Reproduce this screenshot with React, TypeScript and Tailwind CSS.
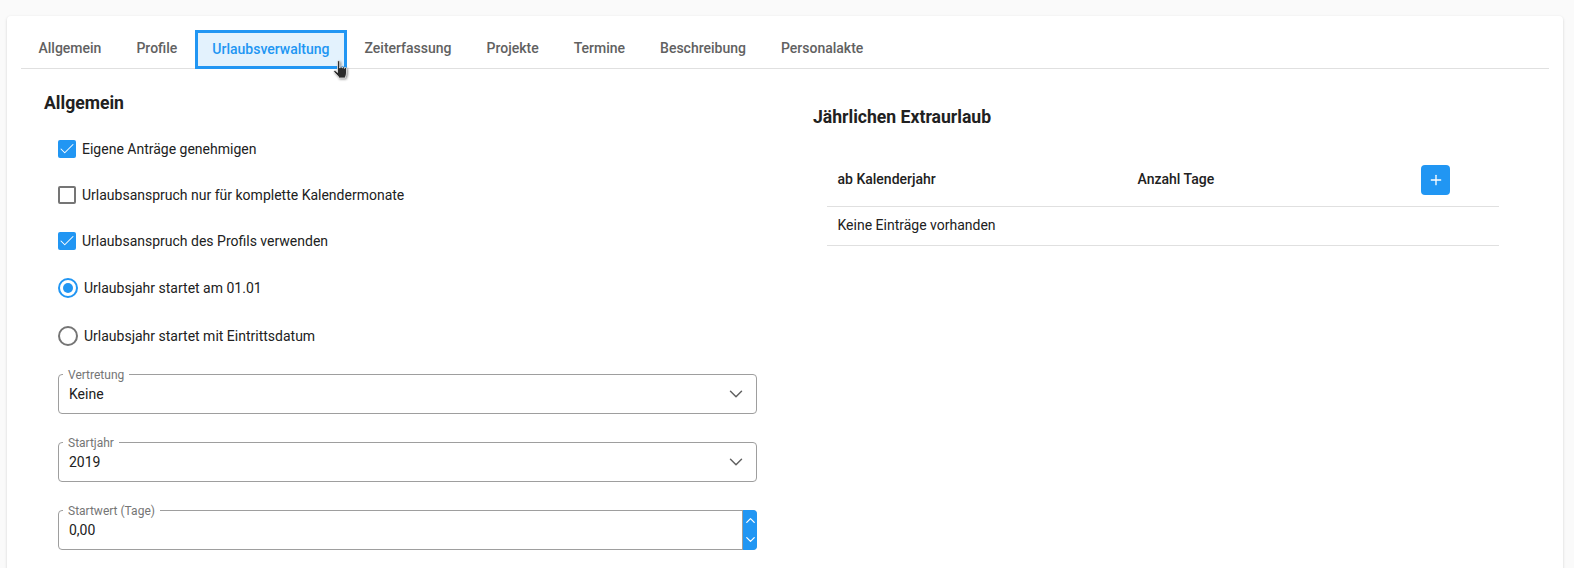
import React from "react";
import { Check, ChevronDown, ChevronUp, Plus } from "lucide-react";

const tabs = ["Allgemein", "Profile", "Urlaubsverwaltung", "Zeiterfassung", "Projekte", "Termine", "Beschreibung", "Personalakte"];

const CheckRow = ({ label, checked }: { label: string; checked?: boolean }) => (
	<div className="flex h-[46px] items-center">
		{checked ? (
			<span className="flex h-[18px] w-[18px] shrink-0 items-center justify-center rounded-[2px] bg-[#2196f3]">
				<Check size={18} strokeWidth={1.4} className="text-white" />
			</span>
		) : (
			<span className="h-[18px] w-[18px] shrink-0 rounded-[2px] border-2 border-[#757575]" />
		)}
		<span className="ml-[6px] text-sm text-[#212121]">{label}</span>
	</div>
);

const RadioRow = ({ label, checked }: { label: string; checked?: boolean }) => (
	<div className="flex h-[48px] items-center">
		{checked ? (
			<span className="flex h-5 w-5 items-center justify-center rounded-full border-2 border-[#2196f3]">
				<span className="h-[10px] w-[10px] rounded-full bg-[#2196f3]" />
			</span>
		) : (
			<span className="h-5 w-5 rounded-full border-2 border-[#757575]" />
		)}
		<span className="ml-[6px] text-sm text-[#212121]">{label}</span>
	</div>
);

const Field = ({ label, value, spinner }: { label: string; value: string; spinner?: boolean }) => (
	<div className="relative flex h-[40px] w-[699px] items-center justify-between rounded-[4px] border border-[#9e9e9e] pl-[10px] pr-[9px]">
		<span className="absolute left-[4px] top-[-6px] bg-white px-[5px] text-xs leading-[12px] text-[#757575]">{label}</span>
		<span className="text-sm text-[#212121]">{value}</span>
		{!spinner && <ChevronDown size={22} strokeWidth={1.6} className="text-[#616161]" />}
		{spinner && (
			<div className="absolute -bottom-px -right-px -top-px flex w-[15px] flex-col items-center justify-between rounded-r-[4px] border-l border-[#9e9e9e] bg-[#2196f3] py-[3px] text-white">
				<ChevronUp size={15} strokeWidth={2} />
				<ChevronDown size={15} strokeWidth={2} />
			</div>
		)}
	</div>
);

const HandCursor = () => (
	<svg width="16" height="19" viewBox="0 0 16 19" className="absolute left-[326px] top-[44px] drop-shadow-[1px_1px_1px_rgba(0,0,0,0.45)]">
		<path
			d="M4.5 1.5c0-1 2.2-1 2.2 0V8h.4V6.8c0-.8 1.9-.8 1.9 0V8h.4V7.3c0-.8 1.9-.8 1.9 0v1.1h.3V8c0-.8 1.9-.8 1.9 0v5c0 1.5-.5 2.7-1.1 3.7V18H5.5v-1.3L1 12c-.7-1 .5-2.2 1.5-1.2l2 1.7z"
			fill="#2b2b2b"
			stroke="#ffffff"
			strokeWidth="0.7"
		/>
	</svg>
);

export default function App() {
	return (
		<div className="h-[568px] overflow-hidden bg-[#fafafa] pl-[7px] pt-4 font-['Roboto',sans-serif]">
			<div className="relative h-[600px] w-[1556px] rounded-[4px] bg-white px-[14px] pt-[14px] shadow-[0_1px_3px_rgba(0,0,0,0.16)]">
				<div className="flex h-[39px] w-[1528px] border-b border-[#e0e0e0]">
					{tabs.map((t) =>
						t === "Urlaubsverwaltung" ? (
							<div
								key={t}
								className="flex h-[39px] items-center border-[3px] border-[#2196f3] bg-[#e3f2fd] px-[14.5px] pb-[1px] text-sm font-medium text-[#2196f3]"
							>
								{t}
							</div>
						) : (
							<div key={t} className="flex h-[38px] items-center px-[17.5px] pb-[3px] text-sm font-medium text-[#616161]">
								{t}
							</div>
						),
					)}
				</div>
				<HandCursor />
				<div className="flex">
					<div className="w-[792px]">
						<h2 className="ml-[23px] mt-[22px] text-[17.6px] leading-6 font-bold text-[#212121]">Allgemein</h2>
						<div className="ml-[37px] mt-[11px]">
							<CheckRow label="Eigene Anträge genehmigen" checked />
							<CheckRow label="Urlaubsanspruch nur für komplette Kalendermonate" />
							<CheckRow label="Urlaubsanspruch des Profils verwenden" checked />
							<RadioRow label="Urlaubsjahr startet am 01.01" checked />
							<RadioRow label="Urlaubsjahr startet mit Eintrittsdatum" />
							<div className="mt-[14px] flex flex-col gap-[28px]">
								<Field label="Vertretung" value="Keine" />
								<Field label="Startjahr" value="2019" />
								<Field label="Startwert (Tage)" value="0,00" spinner />
							</div>
						</div>
					</div>
					<div className="w-[686px]">
						<h2 className="mt-[36px] text-[17.6px] leading-6 font-bold text-[#212121]">Jährlichen Extraurlaub</h2>
						<div className="ml-[14px] mt-[24px] w-[672px] text-sm text-[#212121]">
							<div className="flex h-[54px] items-center border-b border-[#e0e0e0] pl-[10.5px] font-medium">
								<span className="w-[300px] pb-[2px]">ab Kalenderjahr</span>
								<span className="w-[283.5px] pb-[2px]">Anzahl Tage</span>
								<button className="flex h-[30px] w-[29px] items-center justify-center rounded-[4px] bg-[#2196f3] text-white">
									<Plus size={16} strokeWidth={2} />
								</button>
							</div>
							<div className="flex h-[39px] items-center border-b border-[#e0e0e0] pb-[2px] pl-[10.5px]">Keine Einträge vorhanden</div>
						</div>
					</div>
				</div>
			</div>
		</div>
	);
}
